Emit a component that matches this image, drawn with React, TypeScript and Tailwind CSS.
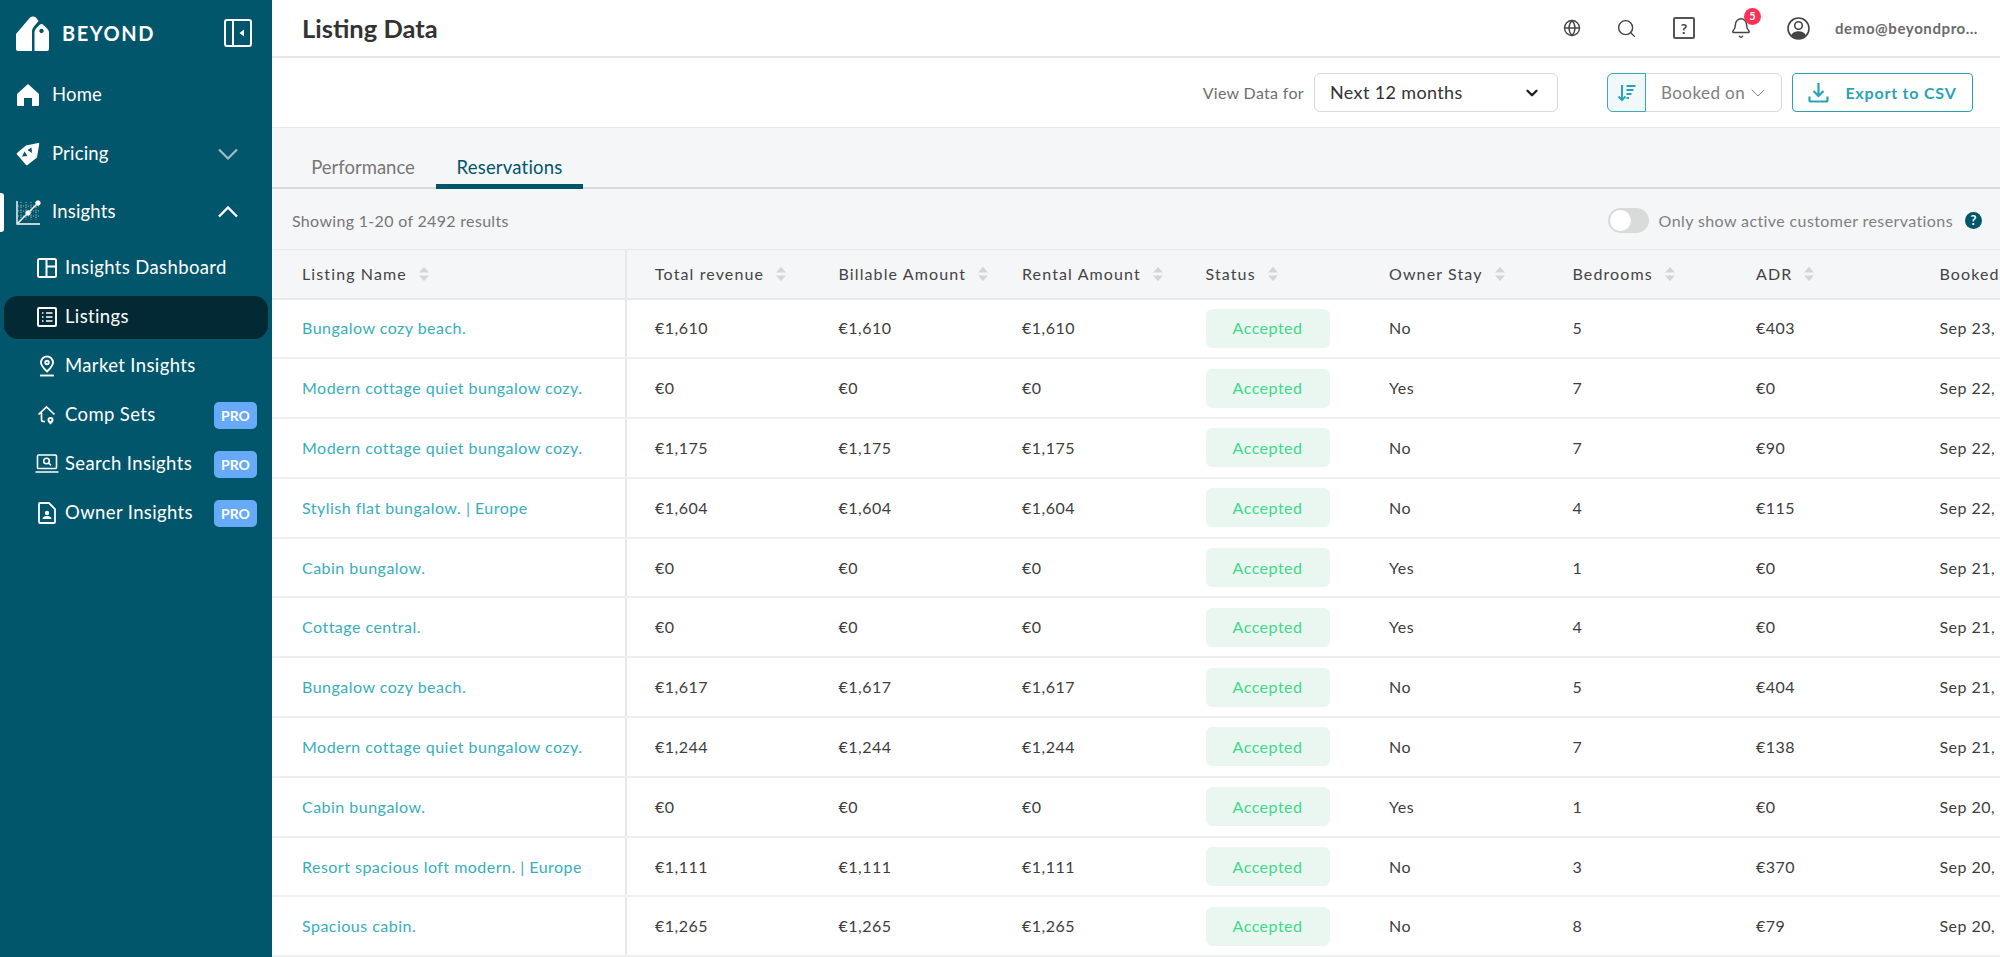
import { Bell, ChevronDown, Globe, Search } from "lucide-react";

const rows = [
  ["Bungalow cozy beach.", "€1,610", "No", "5", "€403", "Sep 23,"],
  ["Modern cottage quiet bungalow cozy.", "€0", "Yes", "7", "€0", "Sep 22,"],
  ["Modern cottage quiet bungalow cozy.", "€1,175", "No", "7", "€90", "Sep 22,"],
  ["Stylish flat bungalow. | Europe", "€1,604", "No", "4", "€115", "Sep 22,"],
  ["Cabin bungalow.", "€0", "Yes", "1", "€0", "Sep 21,"],
  ["Cottage central.", "€0", "Yes", "4", "€0", "Sep 21,"],
  ["Bungalow cozy beach.", "€1,617", "No", "5", "€404", "Sep 21,"],
  ["Modern cottage quiet bungalow cozy.", "€1,244", "No", "7", "€138", "Sep 21,"],
  ["Cabin bungalow.", "€0", "Yes", "1", "€0", "Sep 20,"],
  ["Resort spacious loft modern. | Europe", "€1,111", "No", "3", "€370", "Sep 20,"],
  ["Spacious cabin.", "€1,265", "No", "8", "€79", "Sep 20,"],
];

const gridCols = "grid w-[1823px] grid-cols-[355px_repeat(8,183.5px)]";

function SortArrows() {
  return (
    <svg width="12" height="14" viewBox="0 0 12 14" className="ml-[11px] shrink-0" fill="#d3d5d8">
      <path d="M6 0l5 5.500H1z" />
      <path d="M6 14L1 8.500h10z" />
    </svg>
  );
}

function LogoMark() {
  return (
    <svg width="33" height="35" viewBox="0 0 33 35" fill="white">
      <path d="M0 18 L14 1.500 Q17 -0.500 20 1.500 L22.500 5 L17.500 11 Q16 13 16 15 V35 H2 Q0 35 0 33 Z" />
      <path fillRule="evenodd" d="M18.500 16 Q18.500 14 20 12.500 L24 8.500 Q25.500 7.500 27 8.500 L31.500 13 Q33 14.500 33 16.500 V33 Q33 35 31 35 H18.500 Z M25.500 12.800 a2.200 2.200 0 1 0 0.010 0 Z" />
    </svg>
  );
}

function NavItem({ label, icon, chevron, active }: { label: string; icon: React.ReactNode; chevron?: "up" | "down"; active?: boolean }) {
  return (
    <div className="relative flex h-[58.5px] items-center pl-[16px] pr-[34px]">
      {active && <div className="absolute left-0 top-[10px] h-[39px] w-[4px] rounded-r-[3px] bg-white" />}
      <div className="flex w-[36px] shrink-0 items-center">{icon}</div>
      <span className="text-[18.5px] tracking-[0.01em] text-white">{label}</span>
      {chevron === "down" && (
        <svg width="20" height="12" viewBox="0 0 20 12" fill="none" stroke="#9dbcc5" strokeWidth="2.200" className="ml-auto">
          <path d="M1 1.500l9 9 9-9" />
        </svg>
      )}
      {chevron === "up" && (
        <svg width="20" height="12" viewBox="0 0 20 12" fill="none" stroke="white" strokeWidth="2.400" className="ml-auto">
          <path d="M1 10.500l9-9 9 9" />
        </svg>
      )}
    </div>
  );
}

function SubItem({ label, icon, pro, active }: { label: string; icon: React.ReactNode; pro?: boolean; active?: boolean }) {
  return (
    <div className={`mx-[4px] flex h-[43px] items-center rounded-[14px] pl-[27px] pr-[11px] ${active ? "bg-[#032935]" : ""}`}>
      <div className="flex w-[32px] shrink-0 items-center justify-center">{icon}</div>
      <span className="ml-[2px] text-[18.5px] tracking-[0.02em] text-white">{label}</span>
      {pro && (
        <span className="ml-auto flex h-[27px] w-[43px] items-center justify-center rounded-[5px] bg-[#66aaf8] text-[14px] font-bold text-white">
          PRO
        </span>
      )}
    </div>
  );
}

function Th({ label, first }: { label: string; first?: boolean }) {
  return (
    <div className={`flex items-center whitespace-nowrap text-[16px] tracking-[0.07em] text-[#444] ${first ? "border-r-2 border-[#e6e8ea] pl-[30px]" : "pl-[28px]"}`}>
      {label}
      <SortArrows />
    </div>
  );
}

export default function App() {
  return (
    <div className="flex h-[957px] w-[2000px] overflow-hidden bg-[#f5f6f8] font-['Lato',sans-serif]">
      {/* Sidebar */}
      <aside className="w-[272px] shrink-0 bg-[#02566b]">
        <div className="flex h-[66px] items-center pl-[16px] pr-[20px]">
          <LogoMark />
          <span className="ml-[13px] text-[20px] font-bold tracking-[0.08em] text-white">BEYOND</span>
          <svg width="28" height="28" viewBox="0 0 28 28" fill="none" className="ml-auto" stroke="white" strokeWidth="2">
            <rect x="1" y="1" width="26" height="26" rx="2" />
            <path d="M9 1v26" />
            <path d="M20 10.500v7l-4.500-3.500z" fill="white" stroke="none" />
          </svg>
        </div>
        <NavItem
          label="Home"
          icon={
            <svg width="24" height="24" viewBox="0 0 24 24" fill="white">
              <path d="M12 1L1 11v11a1 1 0 0 0 1 1h6v-8h8v8h6a1 1 0 0 0 1-1V11z" />
            </svg>
          }
        />
        <NavItem
          label="Pricing"
          chevron="down"
          icon={
            <svg width="24" height="24" viewBox="0 0 24 24" fill="white">
              <path fillRule="evenodd" d="M1 11L10 3.500L22 1a1 1 0 0 1 1.200 1.200L21 15.500L11.500 23a1 1 0 0 1-1.400 0L1 12.400a1 1 0 0 1 0-1.400z M15.500 5.500L16 11L11.500 8z M8.500 9.500L11.500 14L6 14.500z" />
            </svg>
          }
        />
        <NavItem
          label="Insights"
          chevron="up"
          active
          icon={
            <svg width="25" height="25" viewBox="0 0 25 25" fill="none" stroke="white">
              <path d="M1 1v23h23" strokeWidth="1.400" />
              <path d="M5 2v18M10 2v18M15 2v18M20 2v18M2 6h21M2 11h21M2 16h21" strokeWidth="0.600" strokeDasharray="1 1.500" />
              <path d="M2 23L22 3" strokeWidth="1.600" />
              <circle cx="22" cy="3" r="2.200" fill="white" />
              <circle cx="12" cy="13" r="2.200" fill="white" />
            </svg>
          }
        />
        <div className="flex flex-col gap-[6px] pt-[5px]">
          <SubItem
            label="Insights Dashboard"
            icon={
              <svg width="20" height="20" viewBox="0 0 20 20" fill="none" stroke="white" strokeWidth="2">
                <rect x="1" y="1" width="18" height="18" rx="1.500" />
                <path d="M9.500 1v18M9.500 8.500H19" />
              </svg>
            }
          />
          <SubItem
            label="Listings"
            active
            icon={
              <svg width="20" height="20" viewBox="0 0 20 20" fill="none" stroke="white" strokeWidth="2">
                <rect x="1" y="1" width="18" height="18" rx="1" />
                <path d="M5 6h1.500M9 6h6.500M5 10h1.500M9 10h6.500M5 14h1.500M9 14h6.500" strokeWidth="1.700" />
              </svg>
            }
          />
          <SubItem
            label="Market Insights"
            icon={
              <svg width="20" height="22" viewBox="0 0 20 22" fill="none" stroke="white" strokeWidth="1.900">
                <path d="M10 16.500C7 13.500 4 11 4 7.500a6 6 0 0 1 12 0c0 3.500-3 6-6 9z" />
                <circle cx="10" cy="7.500" r="1.800" />
                <path d="M3 20.500h14" />
              </svg>
            }
          />
          <SubItem
            label="Comp Sets"
            pro
            icon={
              <svg width="20" height="20" viewBox="0 0 20 20" fill="none" stroke="white" strokeWidth="1.700">
                <path d="M1.500 9.500L9.500 2l8 7.500M4.500 7.500v7a2 2 0 0 0 2 2H8" />
                <path fillRule="evenodd" d="M13.500 19.500c-1.800-1.800-3-3-3-4.500a3 3 0 0 1 6 0c0 1.500-1.200 2.700-3 4.500z M13.500 14a1 1 0 1 0 .01 0z" fill="white" stroke="none" />
              </svg>
            }
          />
          <SubItem
            label="Search Insights"
            pro
            icon={
              <svg width="24" height="20" viewBox="0 0 24 20" fill="none" stroke="white" strokeWidth="1.600">
                <rect x="2.500" y="1" width="19" height="13.500" rx="1" />
                <circle cx="11.500" cy="7" r="2.800" />
                <path d="M13.500 9l2.500 2.300M0.500 18h23" />
              </svg>
            }
          />
          <SubItem
            label="Owner Insights"
            pro
            icon={
              <svg width="18" height="22" viewBox="0 0 18 22" fill="none" stroke="white" strokeWidth="1.800">
                <path d="M2 1h9l6 6v13a1 1 0 0 1-1 1H2a1 1 0 0 1-1-1V2a1 1 0 0 1 1-1z" />
                <circle cx="9" cy="11" r="2.200" fill="white" stroke="none" />
                <path d="M4.500 17c0-2 2-3 4.500-3s4.500 1 4.500 3z" fill="white" stroke="none" />
              </svg>
            }
          />
        </div>
      </aside>

      {/* Main */}
      <main className="flex min-w-0 flex-1 flex-col">
        <header className="flex h-[58px] shrink-0 items-center border-b-2 border-[#e6e7e9] bg-white pl-[30px] pr-[17px]">
          <h1 className="text-[25.5px] font-bold text-[#333]">Listing Data</h1>
          <div className="ml-auto flex items-center">
            <Globe size={18} strokeWidth={1.800} className="text-[#444]" />
            <Search size={21} strokeWidth={1.600} className="ml-[35px] text-[#444]" />
            <div className="ml-[36px] flex h-[22px] w-[22px] items-center justify-center rounded-[2px] border-2 border-[#555] text-[14px] font-bold text-[#444]">?</div>
            <div className="relative ml-[35px]">
              <Bell size={22} strokeWidth={1.600} className="text-[#444]" />
              <span className="absolute -right-[9px] -top-[9px] flex h-[17px] w-[17px] items-center justify-center rounded-full bg-[#fb3158] text-[11px] font-bold text-white">5</span>
            </div>
            <svg width="23" height="23" viewBox="0 0 23 23" className="ml-[35px]">
              <circle cx="11.500" cy="11.500" r="10.500" fill="white" stroke="#444" strokeWidth="1.600" />
              <circle cx="11.500" cy="8.500" r="3.800" fill="none" stroke="#444" strokeWidth="1.600" />
              <path d="M4 18.500c1.500-3 4-4.200 7.500-4.200s6 1.200 7.500 4.200a10.500 10.500 0 0 1-15 0z" fill="#444" />
            </svg>
            <div className="ml-[25px] w-[148px] truncate text-[15px] font-bold tracking-[0.04em] text-[#6b6b6b]">demo@beyondproperties.com</div>
          </div>
        </header>

        <div className="flex h-[70px] shrink-0 items-center border-b border-[#e8e9eb] bg-white pr-[27px]">
          <span className="ml-auto text-[16px] tracking-[0.02em] text-[#6f6f6f]">View Data for</span>
          <div className="ml-[10px] flex h-[39px] w-[244px] items-center justify-between rounded-[6px] border border-[#d9dadc] pl-[15px] pr-[16px]">
            <span className="text-[18px] tracking-[0.02em] text-[#333]">Next 12 months</span>
            <ChevronDown size={18} strokeWidth={3.200} className="text-[#222]" />
          </div>
          <div className="ml-[49px] flex h-[39px] w-[175px] items-center rounded-[6px] border border-[#d9dadc]">
            <div className="-my-px -ml-px flex h-[39px] w-[39px] items-center justify-center rounded-l-[6px] border border-[#3aa9b8] bg-[#f0f8fa]">
              <svg width="20" height="20" viewBox="0 0 20 20" fill="none" stroke="#2aa3b3" strokeWidth="2">
                <path d="M5 2v15M1.500 13.500L5 17l3.500-3.500" />
                <path d="M9.500 3h9M9.500 7h7M9.500 11h5M9.500 15h2.500" />
              </svg>
            </div>
            <span className="ml-[15px] text-[17px] tracking-[0.025em] text-[#808080]">Booked on</span>
            <ChevronDown size={24} strokeWidth={1} className="ml-[1px] text-[#808080]" />
          </div>
          <div className="ml-[10px] flex h-[39px] w-[181px] items-center justify-center rounded-[4px] border border-[#2aa3b3] text-[#2aa3b3]">
            <svg width="21" height="21" viewBox="0 0 21 21" fill="none" stroke="#2aa3b3" strokeWidth="2.200">
              <path d="M10.500 1v12.500M5.500 9l5 5 5-5M1.500 14.500v3.500a1.500 1.500 0 0 0 1.500 1.500h15a1.500 1.500 0 0 0 1.500-1.500v-3.500" />
            </svg>
            <span className="ml-[16px] text-[16px] font-bold tracking-[0.05em]">Export to CSV</span>
          </div>
        </div>

        <div className="flex h-[61px] shrink-0 items-end border-b-2 border-[#d9dbde] pl-[18px]">
          <div className="-mb-[2px] flex h-[37px] w-[146px] items-start justify-center pt-[2px]">
            <span className="text-[18.5px] text-[#777]">Performance</span>
          </div>
          <div className="-mb-[2px] flex h-[37px] w-[147px] items-start justify-center border-b-[5px] border-[#02566b] pt-[2px]">
            <span className="text-[18.5px] tracking-[0.01em] text-[#02566b]">Reservations</span>
          </div>
        </div>

        <div className="flex h-[60px] shrink-0 items-center pl-[20px] pr-[18px] pt-[3px]">
          <span className="text-[16px] tracking-[0.02em] text-[#777]">Showing 1-20 of 2492 results</span>
          <div className="ml-auto flex h-[25px] w-[41px] items-center rounded-full bg-[#d9dbdb] pl-[2px]">
            <div className="h-[21px] w-[21px] rounded-full bg-white" />
          </div>
          <span className="ml-[10px] text-[16px] tracking-[0.025em] text-[#808080]">Only show active customer reservations</span>
          <div className="ml-[12px] flex h-[17px] w-[17px] items-center justify-center rounded-full bg-[#02566b] text-[13px] font-bold text-white">?</div>
        </div>

        <div className="min-h-0 flex-1 overflow-hidden border-t border-[#e6e8ea]">
          <div className={`${gridCols} h-[49.5px] border-b-2 border-[#e6e8ea] bg-[#f5f6f8]`}>
            <Th label="Listing Name" first />
            <Th label="Total revenue" />
            <Th label="Billable Amount" />
            <Th label="Rental Amount" />
            <Th label="Status" />
            <Th label="Owner Stay" />
            <Th label="Bedrooms" />
            <Th label="ADR" />
            <div className="flex items-center pl-[28px] text-[16px] tracking-[0.07em] text-[#444]">Booked</div>
          </div>
          {rows.map((r, i) => (
            <div key={i} className={`${gridCols} h-[59.8px] items-stretch border-b-2 border-[#eeeff0] bg-white text-[16px] tracking-[0.03em] text-[#3d3d3d]`}>
              <div className="flex items-center border-r-2 border-[#e6e8ea] pl-[30px] text-[#38aebb]">{r[0]}</div>
              <div className="flex items-center pl-[28px]">{r[1]}</div>
              <div className="flex items-center pl-[28px]">{r[1]}</div>
              <div className="flex items-center pl-[28px]">{r[1]}</div>
              <div className="flex items-center pl-[28px]">
                <div className="flex h-[39px] w-[124px] items-center justify-center rounded-[6px] bg-[#e9f7f0] text-[#3fd98c]">Accepted</div>
              </div>
              <div className="flex items-center pl-[28px]">{r[2]}</div>
              <div className="flex items-center pl-[28px]">{r[3]}</div>
              <div className="flex items-center pl-[28px]">{r[4]}</div>
              <div className="flex items-center whitespace-nowrap pl-[28px]">{r[5]}</div>
            </div>
          ))}
        </div>
      </main>
    </div>
  );
}
